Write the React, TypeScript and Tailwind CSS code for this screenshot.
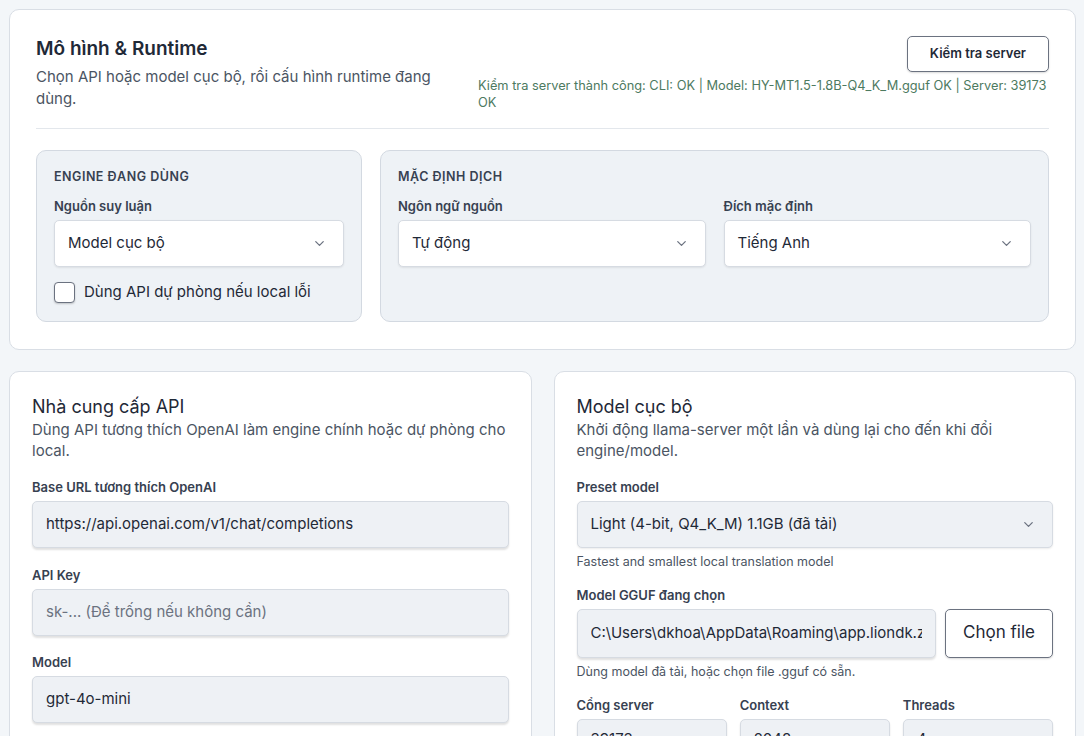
import { ChevronDown } from "lucide-react";

function Label({ children }: { children: React.ReactNode }) {
  return <div className="mb-[5px] text-[13px] font-semibold leading-[18px] text-[#374151]">{children}</div>;
}

function SelectBox({ value, gray }: { value: string; gray?: boolean }) {
  return (
    <div
      className={
        "flex h-[47px] items-center justify-between rounded-[5px] border border-[#d6dbe2] pl-[13px] pr-[16px] text-[15px] text-[#1f2937] shadow-[0_1px_2px_rgba(0,0,0,0.08)] " +
        (gray ? "bg-[#eef1f5]" : "bg-white")
      }
    >
      <span>{value}</span>
      <ChevronDown className="h-[15px] w-[15px] text-[#6b7280]" strokeWidth={2} />
    </div>
  );
}

function TextInput({ value, placeholder, className = "h-[47px]" }: { value?: string; placeholder?: string; className?: string }) {
  return (
    <div
      className={
        "flex items-center overflow-hidden whitespace-nowrap rounded-[5px] border border-[#d6dbe2] bg-[#eef1f5] px-[13px] text-[15px] shadow-[0_2px_2px_rgba(0,0,0,0.12)] " +
        (value ? "text-[#1f2937] " : "text-[#6b7280] ") +
        className
      }
    >
      <span className="min-w-0 overflow-hidden">{value ?? placeholder}</span>
    </div>
  );
}

function Helper({ children }: { children: React.ReactNode }) {
  return <div className="mt-[5px] text-[12.5px] leading-[17px] text-[#4b5563]">{children}</div>;
}

export default function App() {
  return (
    <div
      className="min-h-[736px] bg-[#f3f6f9] pb-[9px] pl-[9px] pr-[8px] pt-[9px] text-[#111827]"
      style={{ fontFamily: "Inter, 'Noto Sans', sans-serif" }}
    >
      {/* Top card */}
      <section className="rounded-[10px] border border-[#d9dee5] bg-white px-[26px] pb-[27px] pt-[26px]">
        <div className="flex items-start justify-between gap-[24px]">
          <div className="w-[418px] shrink-0">
            <h1 className="text-[19px] font-semibold leading-[26px] text-[#1f2937]">Mô hình &amp; Runtime</h1>
            <p className="mt-[4px] text-[15px] leading-[22px] text-[#4b5563]">
              Chọn API hoặc model cục bộ, rồi cấu hình runtime đang dùng.
            </p>
          </div>
          <div className="flex flex-1 flex-col items-end">
            <button className="h-[36px] rounded-[5px] border border-[#6b7280] bg-white px-[22px] text-[13px] font-semibold text-[#1f2937] shadow-[0_1px_2px_rgba(0,0,0,0.15)]">
              Kiểm tra server
            </button>
            <p className="mt-[5px] w-full text-[12.8px] leading-[17px] text-[#4d7a5f]">
              Kiểm tra server thành công: CLI: OK | Model: HY-MT1.5-1.8B-Q4_K_M.gguf OK | Server: 39173 OK
            </p>
          </div>
        </div>

        <div className="mt-[17px] border-t border-[#e3e7ec]" />

        <div className="mt-[21px] flex gap-[18px]">
          <div className="w-[326px] shrink-0 rounded-[10px] border border-[#d3d9e1] bg-[#eef2f6] px-[17px] pb-[17px] pt-[17px]">
            <div className="text-[12.5px] font-semibold uppercase leading-[18px] tracking-[0.04em] text-[#374151]">
              Engine đang dùng
            </div>
            <div className="mt-[11px]">
              <Label>Nguồn suy luận</Label>
              <SelectBox value="Model cục bộ" />
            </div>
            <label className="mt-[14px] flex items-center gap-[9px] text-[15px] text-[#1f2937]">
              <span className="h-[21px] w-[21px] rounded-[4px] border border-[#6b7280] bg-white shadow-[0_1px_2px_rgba(0,0,0,0.2)]" />
              Dùng API dự phòng nếu local lỗi
            </label>
          </div>

          <div className="flex-1 rounded-[10px] border border-[#d3d9e1] bg-[#eef2f6] px-[17px] pb-[17px] pt-[17px]">
            <div className="text-[12.5px] font-semibold uppercase leading-[18px] tracking-[0.04em] text-[#374151]">
              Mặc định dịch
            </div>
            <div className="mt-[11px] grid grid-cols-2 gap-[18px]">
              <div>
                <Label>Ngôn ngữ nguồn</Label>
                <SelectBox value="Tự động" />
              </div>
              <div>
                <Label>Đích mặc định</Label>
                <SelectBox value="Tiếng Anh" />
              </div>
            </div>
          </div>
        </div>
      </section>

      {/* Bottom cards */}
      <div className="mt-[21px] grid grid-cols-2 gap-[22px]">
        <section className="rounded-[10px] border border-[#d9dee5] bg-white px-[22px] pb-[24px] pt-[22px]">
          <h2 className="text-[18px] leading-[25px] text-[#1f2937]">Nhà cung cấp API</h2>
          <p className="text-[15px] leading-[21px] text-[#4b5563]">
            Dùng API tương thích OpenAI làm engine chính hoặc dự phòng cho local.
          </p>
          <div className="mt-[17px]">
            <Label>Base URL tương thích OpenAI</Label>
            <TextInput value="https://api.openai.com/v1/chat/completions" />
          </div>
          <div className="mt-[18px]">
            <Label>API Key</Label>
            <TextInput placeholder="sk-... (Để trống nếu không cần)" />
          </div>
          <div className="mt-[17px]">
            <Label>Model</Label>
            <TextInput value="gpt-4o-mini" />
          </div>
        </section>

        <section className="rounded-[10px] border border-[#d9dee5] bg-white px-[22px] pb-[24px] pt-[22px]">
          <h2 className="text-[18px] leading-[25px] text-[#1f2937]">Model cục bộ</h2>
          <p className="pr-[60px] text-[15px] leading-[21px] text-[#4b5563]">
            Khởi động llama-server một lần và dùng lại cho đến khi đổi engine/model.
          </p>
          <div className="mt-[17px]">
            <Label>Preset model</Label>
            <SelectBox value="Light (4-bit, Q4_K_M) 1.1GB (đã tải)" gray />
            <Helper>Fastest and smallest local translation model</Helper>
          </div>
          <div className="mt-[16px]">
            <Label>Model GGUF đang chọn</Label>
            <div className="flex gap-[9px]">
              <TextInput
                value="C:\Users\dkhoa\AppData\Roaming\app.liondk.zalo-translate\models\HY-MT1.5-1.8B-Q4_K_M.gguf"
                className="h-[49px] min-w-0 flex-1"
              />
              <button className="h-[49px] w-[108px] shrink-0 rounded-[5px] border border-[#6b7280] bg-white text-[17px] text-[#1f2937] shadow-[0_1px_2px_rgba(0,0,0,0.15)]">
                Chọn file
              </button>
            </div>
            <Helper>Dùng model đã tải, hoặc chọn file .gguf có sẵn.</Helper>
          </div>
          <div className="mt-[16px] grid grid-cols-3 gap-[13px]">
            <div>
              <Label>Cổng server</Label>
              <TextInput value="39173" className="h-[42px]" />
            </div>
            <div>
              <Label>Context</Label>
              <TextInput value="2048" className="h-[42px]" />
            </div>
            <div>
              <Label>Threads</Label>
              <TextInput value="4" className="h-[42px]" />
            </div>
          </div>
        </section>
      </div>
    </div>
  );
}
